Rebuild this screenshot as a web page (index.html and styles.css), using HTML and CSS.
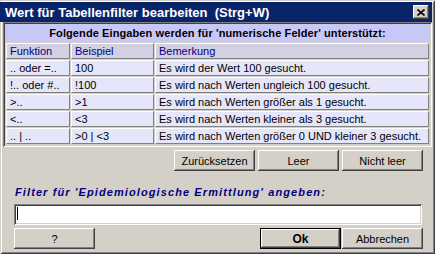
FILE: index.html
```html
<!DOCTYPE html>
<html lang="de">
<head>
    <meta charset="UTF-8">
    <title>Wert für Tabellenfilter bearbeiten</title>
    <link rel="stylesheet" href="styles.css">
</head>
<body>
    <div class="window">
        <div class="titlebar">
            <span class="title">Wert für Tabellenfilter bearbeiten&nbsp; (Strg+W)</span>
            <span class="close-btn">
                <svg width="8" height="7" viewBox="0 0 8 7">
                    <path d="M0.5 0.5 L7.5 6.5 M7.5 0.5 L0.5 6.5" stroke="#000" stroke-width="1.6" fill="none"/>
                </svg>
            </span>
        </div>

        <div class="dialog-body">
            <div class="grid-frame">
                <div class="grid-caption">Folgende Eingaben werden für 'numerische Felder' unterstützt:</div>
                <table class="grid">
                    <tr>
                        <th class="col-fn">Funktion</th>
                        <th class="col-ex">Beispiel</th>
                        <th>Bemerkung</th>
                    </tr>
                    <tr>
                        <td>.. oder =..</td>
                        <td>100</td>
                        <td>Es wird der Wert 100 gesucht.</td>
                    </tr>
                    <tr>
                        <td>!.. oder #..</td>
                        <td>!100</td>
                        <td>Es wird nach Werten ungleich 100 gesucht.</td>
                    </tr>
                    <tr>
                        <td>&gt;..</td>
                        <td>&gt;1</td>
                        <td>Es wird nach Werten größer als 1 gesucht.</td>
                    </tr>
                    <tr>
                        <td>&lt;..</td>
                        <td>&lt;3</td>
                        <td>Es wird nach Werten kleiner als 3 gesucht.</td>
                    </tr>
                    <tr>
                        <td>.. | ..</td>
                        <td>&gt;0 | &lt;3</td>
                        <td>Es wird nach Werten größer 0 UND kleiner 3 gesucht.</td>
                    </tr>
                </table>
            </div>

            <div class="btn-row top-btns">
                <button class="btn">Zurücksetzen</button>
                <button class="btn">Leer</button>
                <button class="btn">Nicht leer</button>
            </div>

            <div class="filter-label">Filter für 'Epidemiologische Ermittlung' angeben:</div>
            <div class="text-field"><span class="caret"></span></div>

            <div class="btn-row bottom-btns">
                <button class="btn">?</button>
                <span class="spacer"></span>
                <button class="btn btn-default">Ok</button>
                <button class="btn">Abbrechen</button>
            </div>
        </div>
    </div>
</body>
</html>
```

FILE: styles.css
```css
* {
    margin: 0;
    padding: 0;
    box-sizing: border-box;
}

body {
    width: 435px;
    height: 254px;
    overflow: hidden;
    font-family: "Liberation Sans", Arial, sans-serif;
    font-size: 11px;
    color: #000;
}

.window {
    width: 435px;
    height: 254px;
    background-color: #d4d0c8;
    padding: 2px 3px 3px 0;
    box-shadow: inset 1px 1px #d4d0c8, inset -1px -1px #404040,
                inset 2px 2px #fff, inset -2px -2px #808080;
    display: flex;
    flex-direction: column;
}

/* title bar */
.titlebar {
    height: 20px;
    background-color: #0a246a;
    color: #fff;
    display: flex;
    align-items: center;
    justify-content: space-between;
    padding: 0 3px 0 5px;
}

.title {
    font-weight: bold;
    font-size: 13px;
    white-space: pre;
}

.close-btn {
    width: 16px;
    height: 14px;
    background-color: #d4d0c8;
    display: flex;
    align-items: center;
    justify-content: center;
    box-shadow: inset -1px -1px #404040, inset 1px 1px #fff,
                inset -2px -2px #808080, inset 2px 2px #d4d0c8;
}

.close-btn svg {
    display: block;
}

.dialog-body {
    padding-left: 3px;
    display: flex;
    flex-direction: column;
}

/* hint table */
.grid-frame {
    width: 429px;
    padding: 2px;
    box-shadow: inset 1px 1px #808080, inset -1px -1px #fff,
                inset 2px 2px #404040, inset -2px -2px #d4d0c8;
}

.grid-caption {
    height: 18px;
    line-height: 18px;
    background-color: #c8c8f8;
    font-weight: bold;
    text-align: center;
    letter-spacing: 0.1px;
}

.grid {
    width: 425px;
    table-layout: fixed;
    border-spacing: 1px;
    background-color: #d4d0c8;
}

.grid th,
.grid td {
    height: 16px;
    padding: 0 3px;
    line-height: 14px;
    text-align: left;
    font-weight: normal;
    white-space: nowrap;
    overflow: hidden;
    border-top: 1px solid #fff;
    border-left: 1px solid #fff;
    border-bottom: 1px solid #808080;
    border-right: 1px solid #808080;
    background-color: #e6e6fa;
}

.grid th {
    background-color: #d4d0e4;
    color: #000080;
}

.grid .col-fn {
    width: 64px;
}

.grid .col-ex {
    width: 83px;
}

/* buttons */
.btn-row {
    display: flex;
}

.top-btns {
    margin-top: 3px;
    justify-content: flex-end;
    gap: 3px;
    padding-right: 9px;
}

.bottom-btns {
    margin-top: 3px;
    padding: 0 9px 0 11px;
    gap: 1px;
}

.spacer {
    flex: 1;
}

.btn {
    width: 81px;
    height: 21px;
    border: none;
    background-color: #d4d0c8;
    font-family: "Liberation Sans", Arial, sans-serif;
    font-size: 11px;
    color: #000;
    box-shadow: inset -1px -1px #404040, inset 1px 1px #fff,
                inset -2px -2px #808080, inset 2px 2px #d4d0c8;
}

.btn-default {
    font-weight: bold;
    font-size: 12px;
    border: 1px solid #000;
}

/* filter input */
.filter-label {
    margin-top: 14px;
    padding-left: 12px;
    line-height: 14px;
    color: #000080;
    font-weight: bold;
    font-style: italic;
    letter-spacing: 1.1px;
}

.text-field {
    margin: 5px 0 0 11px;
    width: 408px;
    height: 21px;
    background-color: #fff;
    padding: 3px 0 0 3px;
    box-shadow: inset 1px 1px #808080, inset -1px -1px #fff,
                inset 2px 2px #404040, inset -2px -2px #d4d0c8;
}

.caret {
    display: block;
    width: 1px;
    height: 13px;
    background-color: #000;
}
```
